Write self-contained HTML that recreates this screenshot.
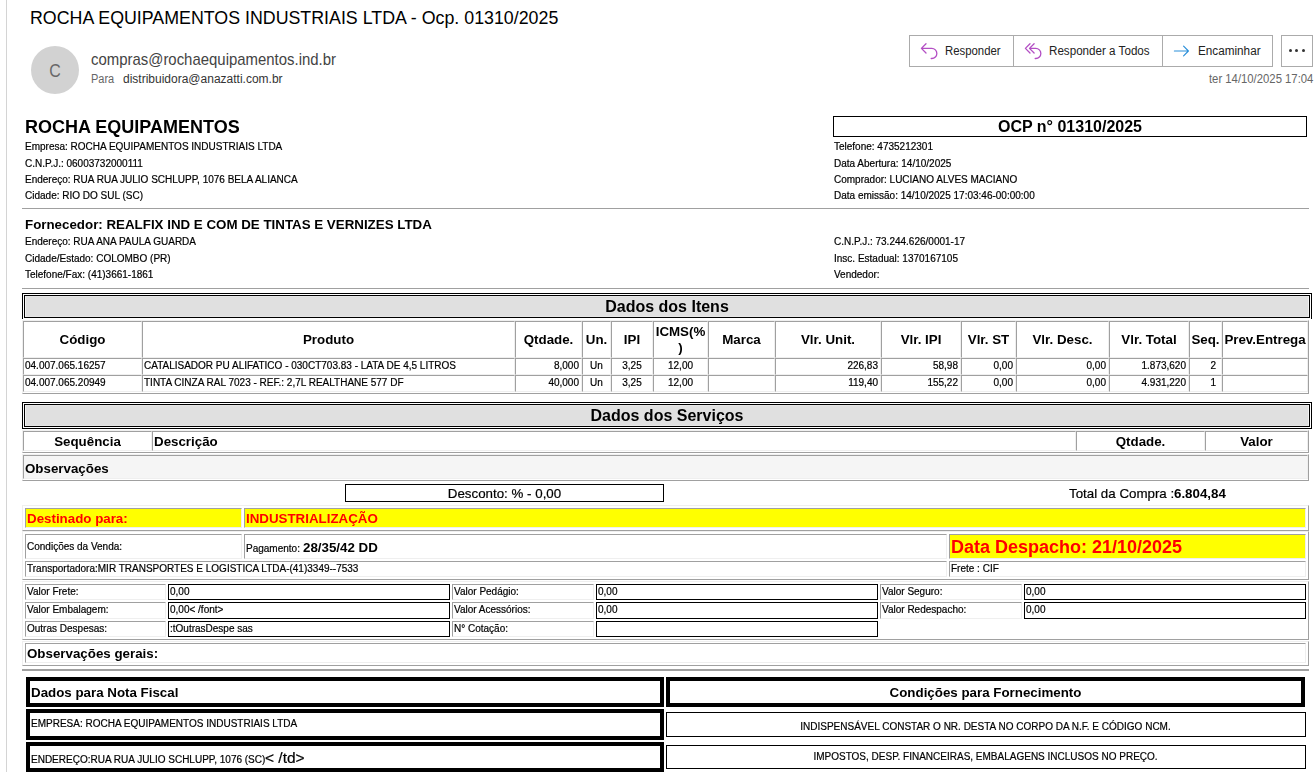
<!DOCTYPE html>
<html><head><meta charset="utf-8"><title>ROCHA EQUIPAMENTOS INDUSTRIAIS LTDA - Ocp. 01310/2025</title>
<style>
html,body{margin:0;padding:0;background:#fff;}
body{width:1315px;height:772px;position:relative;overflow:hidden;font-family:"Liberation Sans",sans-serif;color:#000;}
.t{position:absolute;white-space:nowrap;margin:0;padding:0;}
.b{position:absolute;margin:0;padding:0;}
</style></head><body>
<div class="b" style="left:6px;top:0px;width:1px;height:772px;background:#d4d4d4;"></div>
<div class="t" style="top:6px;line-height:24px;font-size:18px;left:30px;transform:scaleX(0.989);transform-origin:0 0;">ROCHA EQUIPAMENTOS INDUSTRIAIS LTDA - Ocp. 01310/2025</div>
<div class="b" style="left:31px;top:46px;width:48px;height:48px;border-radius:50%;background:#d2d2d2;"></div>
<div class="t" style="top:58px;line-height:25px;font-size:18.5px;color:#686868;left:-245px;width:600px;text-align:center;transform:scaleX(0.86);transform-origin:50% 0;">C</div>
<div class="t" style="top:48px;line-height:23px;font-size:17px;color:#444;left:91px;transform:scaleX(0.878);transform-origin:0 0;">compras@rochaequipamentos.ind.br</div>
<div class="t" style="top:70px;line-height:18px;font-size:12.5px;color:#666;left:91px;transform:scaleX(0.88);transform-origin:0 0;">Para</div>
<div class="t" style="top:70px;line-height:18px;font-size:12.5px;color:#333;left:123px;transform:scaleX(0.96);transform-origin:0 0;">distribuidora@anazatti.com.br</div>
<div class="b" style="left:909px;top:35px;width:364px;height:32px;box-sizing:border-box;border:1px solid #ababab;background:#fff;"></div>
<div class="b" style="left:1013px;top:35px;width:1px;height:32px;background:#ababab;"></div>
<div class="b" style="left:1162px;top:35px;width:1px;height:32px;background:#ababab;"></div>
<div class="b" style="left:1281px;top:35px;width:32px;height:32px;box-sizing:border-box;border:1px solid #ababab;background:#fff;"></div>
<div class="t" style="top:42px;line-height:18px;font-size:12px;color:#222;left:945px;transform:scaleX(0.947);transform-origin:0 0;">Responder</div>
<div class="t" style="top:42px;line-height:18px;font-size:12px;color:#222;left:1049px;transform:scaleX(0.969);transform-origin:0 0;">Responder a Todos</div>
<div class="t" style="top:42px;line-height:18px;font-size:12px;color:#222;left:1198px;transform:scaleX(0.977);transform-origin:0 0;">Encaminhar</div>
<div class="t" style="top:70px;line-height:18px;font-size:12.5px;color:#666;right:2px;text-align:right;transform:scaleX(0.905);transform-origin:100% 0;">ter 14/10/2025 17:04</div>
<svg class="b" style="left:919px;top:42px" width="20" height="20" viewBox="0 0 20 20" fill="none" stroke="#b34fc4" stroke-width="1.3" stroke-linecap="round" stroke-linejoin="round"><path d="M7 1.8 L2.4 6.4 L7 11 M2.6 6.4 H12.8 A5.05 5.05 0 0 1 12.8 16.5 H12.2"/></svg>
<svg class="b" style="left:1023px;top:42px" width="20" height="20" viewBox="0 0 20 20" fill="none" stroke="#b34fc4" stroke-width="1.3" stroke-linecap="round" stroke-linejoin="round"><path d="M7 1.8 L2.4 6.4 L7 11 M11.1 1.8 L6.5 6.4 L11.1 11 M6.7 6.4 H12.8 A5.05 5.05 0 0 1 12.8 16.5 H12.2"/></svg>
<svg class="b" style="left:1172px;top:41.5px" width="20" height="20" viewBox="0 0 20 20" fill="none" stroke="#2b8fd9" stroke-width="1.15" stroke-linecap="round" stroke-linejoin="round"><path d="M2.4 9 H16.4 M11.6 4.2 L16.4 9 L11.6 13.8"/></svg>
<div class="b" style="left:1289.3px;top:49px;width:3px;height:3px;border-radius:50%;background:#333;"></div>
<div class="b" style="left:1295.4px;top:49px;width:3px;height:3px;border-radius:50%;background:#333;"></div>
<div class="b" style="left:1301.6px;top:49px;width:3px;height:3px;border-radius:50%;background:#333;"></div>
<div class="b" style="left:0;top:0;width:1315px;height:772px;will-change:transform;">
<div class="t" style="top:115px;line-height:24px;font-size:18px;font-weight:bold;left:25px;">ROCHA EQUIPAMENTOS</div>
<div class="t" style="top:139px;line-height:15px;font-size:10px;left:25px;-webkit-text-stroke:0.2px #000;">Empresa: ROCHA EQUIPAMENTOS INDUSTRIAIS LTDA</div>
<div class="t" style="top:156px;line-height:15px;font-size:10px;left:25px;-webkit-text-stroke:0.2px #000;">C.N.P.J.: 06003732000111</div>
<div class="t" style="top:172px;line-height:15px;font-size:10px;left:25px;-webkit-text-stroke:0.2px #000;">Endereço: RUA RUA JULIO SCHLUPP, 1076 BELA ALIANCA</div>
<div class="t" style="top:188px;line-height:15px;font-size:10px;left:25px;-webkit-text-stroke:0.2px #000;">Cidade: RIO DO SUL (SC)</div>
<div class="b" style="left:833px;top:116px;width:474px;height:21px;box-sizing:border-box;border:1px solid #000;"></div>
<div class="t" style="top:116px;line-height:21px;font-size:16px;font-weight:bold;left:770px;width:600px;text-align:center;">OCP n° 01310/2025</div>
<div class="t" style="top:139px;line-height:15px;font-size:10px;left:834px;-webkit-text-stroke:0.2px #000;">Telefone: 4735212301</div>
<div class="t" style="top:156px;line-height:15px;font-size:10px;left:834px;-webkit-text-stroke:0.2px #000;">Data Abertura: 14/10/2025</div>
<div class="t" style="top:172px;line-height:15px;font-size:10px;left:834px;-webkit-text-stroke:0.2px #000;">Comprador: LUCIANO ALVES MACIANO</div>
<div class="t" style="top:188px;line-height:15px;font-size:10px;left:834px;-webkit-text-stroke:0.2px #000;">Data emissão: 14/10/2025 17:03:46-00:00:00</div>
<div class="b" style="left:22px;top:208px;width:1287px;height:1px;background:#a0a0a0;"></div>
<div class="t" style="top:215px;line-height:19px;font-size:13.33px;font-weight:bold;left:25px;">Fornecedor: REALFIX IND E COM DE TINTAS E VERNIZES LTDA</div>
<div class="t" style="top:234px;line-height:15px;font-size:10px;left:25px;-webkit-text-stroke:0.2px #000;">Endereço: RUA ANA PAULA GUARDA</div>
<div class="t" style="top:251px;line-height:15px;font-size:10px;left:25px;-webkit-text-stroke:0.2px #000;">Cidade/Estado: COLOMBO (PR)</div>
<div class="t" style="top:267px;line-height:15px;font-size:10px;left:25px;-webkit-text-stroke:0.2px #000;">Telefone/Fax: (41)3661-1861</div>
<div class="t" style="top:234px;line-height:15px;font-size:10px;left:834px;-webkit-text-stroke:0.2px #000;">C.N.P.J.: 73.244.626/0001-17</div>
<div class="t" style="top:251px;line-height:15px;font-size:10px;left:834px;-webkit-text-stroke:0.2px #000;">Insc. Estadual: 1370167105</div>
<div class="t" style="top:267px;line-height:15px;font-size:10px;left:834px;-webkit-text-stroke:0.2px #000;">Vendedor:</div>
<div class="b" style="left:22px;top:288px;width:1287px;height:1px;background:#a0a0a0;"></div>
<div class="b" style="left:22px;top:293px;width:1290px;height:26px;box-sizing:border-box;border:1px solid #000;border-bottom:none;"></div>
<div class="b" style="left:24px;top:295px;width:1286px;height:23px;box-sizing:border-box;border:1px solid #000;background:#e0e0e0;"></div>
<div class="b" style="left:25px;top:296px;width:1284px;height:21px;box-sizing:border-box;border-style:solid;border-width:1px;border-color:#e6e6e6 #f2f2f2;"></div>
<div class="t" style="top:296px;line-height:21px;font-size:16px;font-weight:bold;left:367px;width:600px;text-align:center;">Dados dos Itens</div>
<div class="b" style="left:22px;top:320px;width:1287px;height:74px;box-sizing:border-box;border-style:solid;border-width:1px;border-color:#efefef #a0a0a0 #a0a0a0 #efefef;"></div>
<div class="b" style="left:23px;top:321px;width:119px;height:37px;box-sizing:border-box;border-style:solid;border-width:1px;border-color:#a0a0a0 #efefef #efefef #a0a0a0;"></div>
<div class="t" style="top:330px;line-height:19px;font-size:13.33px;font-weight:bold;left:-217.5px;width:600px;text-align:center;">Código</div>
<div class="b" style="left:142px;top:321px;width:373px;height:37px;box-sizing:border-box;border-style:solid;border-width:1px;border-color:#a0a0a0 #efefef #efefef #a0a0a0;"></div>
<div class="t" style="top:330px;line-height:19px;font-size:13.33px;font-weight:bold;left:28.5px;width:600px;text-align:center;">Produto</div>
<div class="b" style="left:515px;top:321px;width:67px;height:37px;box-sizing:border-box;border-style:solid;border-width:1px;border-color:#a0a0a0 #efefef #efefef #a0a0a0;"></div>
<div class="t" style="top:330px;line-height:19px;font-size:13.33px;font-weight:bold;left:248.5px;width:600px;text-align:center;">Qtdade.</div>
<div class="b" style="left:582px;top:321px;width:29px;height:37px;box-sizing:border-box;border-style:solid;border-width:1px;border-color:#a0a0a0 #efefef #efefef #a0a0a0;"></div>
<div class="t" style="top:330px;line-height:19px;font-size:13.33px;font-weight:bold;left:296.5px;width:600px;text-align:center;">Un.</div>
<div class="b" style="left:611px;top:321px;width:42px;height:37px;box-sizing:border-box;border-style:solid;border-width:1px;border-color:#a0a0a0 #efefef #efefef #a0a0a0;"></div>
<div class="t" style="top:330px;line-height:19px;font-size:13.33px;font-weight:bold;left:332.0px;width:600px;text-align:center;">IPI</div>
<div class="b" style="left:653px;top:321px;width:55px;height:37px;box-sizing:border-box;border-style:solid;border-width:1px;border-color:#a0a0a0 #efefef #efefef #a0a0a0;"></div>
<div class="b" style="left:708px;top:321px;width:67px;height:37px;box-sizing:border-box;border-style:solid;border-width:1px;border-color:#a0a0a0 #efefef #efefef #a0a0a0;"></div>
<div class="t" style="top:330px;line-height:19px;font-size:13.33px;font-weight:bold;left:441.5px;width:600px;text-align:center;">Marca</div>
<div class="b" style="left:775px;top:321px;width:106px;height:37px;box-sizing:border-box;border-style:solid;border-width:1px;border-color:#a0a0a0 #efefef #efefef #a0a0a0;"></div>
<div class="t" style="top:330px;line-height:19px;font-size:13.33px;font-weight:bold;left:528.0px;width:600px;text-align:center;">Vlr. Unit.</div>
<div class="b" style="left:881px;top:321px;width:80px;height:37px;box-sizing:border-box;border-style:solid;border-width:1px;border-color:#a0a0a0 #efefef #efefef #a0a0a0;"></div>
<div class="t" style="top:330px;line-height:19px;font-size:13.33px;font-weight:bold;left:621.0px;width:600px;text-align:center;">Vlr. IPI</div>
<div class="b" style="left:961px;top:321px;width:55px;height:37px;box-sizing:border-box;border-style:solid;border-width:1px;border-color:#a0a0a0 #efefef #efefef #a0a0a0;"></div>
<div class="t" style="top:330px;line-height:19px;font-size:13.33px;font-weight:bold;left:688.5px;width:600px;text-align:center;">Vlr. ST</div>
<div class="b" style="left:1016px;top:321px;width:93px;height:37px;box-sizing:border-box;border-style:solid;border-width:1px;border-color:#a0a0a0 #efefef #efefef #a0a0a0;"></div>
<div class="t" style="top:330px;line-height:19px;font-size:13.33px;font-weight:bold;left:762.5px;width:600px;text-align:center;">Vlr. Desc.</div>
<div class="b" style="left:1109px;top:321px;width:80px;height:37px;box-sizing:border-box;border-style:solid;border-width:1px;border-color:#a0a0a0 #efefef #efefef #a0a0a0;"></div>
<div class="t" style="top:330px;line-height:19px;font-size:13.33px;font-weight:bold;left:849.0px;width:600px;text-align:center;">Vlr. Total</div>
<div class="b" style="left:1189px;top:321px;width:33px;height:37px;box-sizing:border-box;border-style:solid;border-width:1px;border-color:#a0a0a0 #efefef #efefef #a0a0a0;"></div>
<div class="t" style="top:330px;line-height:19px;font-size:13.33px;font-weight:bold;left:905.5px;width:600px;text-align:center;">Seq.</div>
<div class="b" style="left:1222px;top:321px;width:86px;height:37px;box-sizing:border-box;border-style:solid;border-width:1px;border-color:#a0a0a0 #efefef #efefef #a0a0a0;"></div>
<div class="t" style="top:330px;line-height:19px;font-size:13.33px;font-weight:bold;left:965.0px;width:600px;text-align:center;">Prev.Entrega</div>
<div class="t" style="top:322px;line-height:19px;font-size:13.33px;font-weight:bold;left:380.5px;width:600px;text-align:center;">ICMS(%</div>
<div class="t" style="top:338px;line-height:19px;font-size:13.33px;font-weight:bold;left:380.5px;width:600px;text-align:center;">)</div>
<div class="b" style="left:23px;top:358px;width:119px;height:17px;box-sizing:border-box;border-style:solid;border-width:1px;border-color:#a0a0a0 #efefef #efefef #a0a0a0;"></div>
<div class="t" style="top:358px;line-height:15px;font-size:10px;left:25px;-webkit-text-stroke:0.2px #000;">04.007.065.16257</div>
<div class="b" style="left:142px;top:358px;width:373px;height:17px;box-sizing:border-box;border-style:solid;border-width:1px;border-color:#a0a0a0 #efefef #efefef #a0a0a0;"></div>
<div class="t" style="top:358px;line-height:15px;font-size:10px;left:144px;-webkit-text-stroke:0.2px #000;">CATALISADOR PU ALIFATICO - 030CT703.83 - LATA DE 4,5 LITROS</div>
<div class="b" style="left:515px;top:358px;width:67px;height:17px;box-sizing:border-box;border-style:solid;border-width:1px;border-color:#a0a0a0 #efefef #efefef #a0a0a0;"></div>
<div class="t" style="top:358px;line-height:15px;font-size:10px;right:736px;text-align:right;-webkit-text-stroke:0.2px #000;">8,000</div>
<div class="b" style="left:582px;top:358px;width:29px;height:17px;box-sizing:border-box;border-style:solid;border-width:1px;border-color:#a0a0a0 #efefef #efefef #a0a0a0;"></div>
<div class="t" style="top:358px;line-height:15px;font-size:10px;left:296.5px;width:600px;text-align:center;-webkit-text-stroke:0.2px #000;">Un</div>
<div class="b" style="left:611px;top:358px;width:42px;height:17px;box-sizing:border-box;border-style:solid;border-width:1px;border-color:#a0a0a0 #efefef #efefef #a0a0a0;"></div>
<div class="t" style="top:358px;line-height:15px;font-size:10px;left:332.0px;width:600px;text-align:center;-webkit-text-stroke:0.2px #000;">3,25</div>
<div class="b" style="left:653px;top:358px;width:55px;height:17px;box-sizing:border-box;border-style:solid;border-width:1px;border-color:#a0a0a0 #efefef #efefef #a0a0a0;"></div>
<div class="t" style="top:358px;line-height:15px;font-size:10px;left:380.5px;width:600px;text-align:center;-webkit-text-stroke:0.2px #000;">12,00</div>
<div class="b" style="left:708px;top:358px;width:67px;height:17px;box-sizing:border-box;border-style:solid;border-width:1px;border-color:#a0a0a0 #efefef #efefef #a0a0a0;"></div>
<div class="b" style="left:775px;top:358px;width:106px;height:17px;box-sizing:border-box;border-style:solid;border-width:1px;border-color:#a0a0a0 #efefef #efefef #a0a0a0;"></div>
<div class="t" style="top:358px;line-height:15px;font-size:10px;right:437px;text-align:right;-webkit-text-stroke:0.2px #000;">226,83</div>
<div class="b" style="left:881px;top:358px;width:80px;height:17px;box-sizing:border-box;border-style:solid;border-width:1px;border-color:#a0a0a0 #efefef #efefef #a0a0a0;"></div>
<div class="t" style="top:358px;line-height:15px;font-size:10px;right:357px;text-align:right;-webkit-text-stroke:0.2px #000;">58,98</div>
<div class="b" style="left:961px;top:358px;width:55px;height:17px;box-sizing:border-box;border-style:solid;border-width:1px;border-color:#a0a0a0 #efefef #efefef #a0a0a0;"></div>
<div class="t" style="top:358px;line-height:15px;font-size:10px;right:302px;text-align:right;-webkit-text-stroke:0.2px #000;">0,00</div>
<div class="b" style="left:1016px;top:358px;width:93px;height:17px;box-sizing:border-box;border-style:solid;border-width:1px;border-color:#a0a0a0 #efefef #efefef #a0a0a0;"></div>
<div class="t" style="top:358px;line-height:15px;font-size:10px;right:209px;text-align:right;-webkit-text-stroke:0.2px #000;">0,00</div>
<div class="b" style="left:1109px;top:358px;width:80px;height:17px;box-sizing:border-box;border-style:solid;border-width:1px;border-color:#a0a0a0 #efefef #efefef #a0a0a0;"></div>
<div class="t" style="top:358px;line-height:15px;font-size:10px;right:129px;text-align:right;-webkit-text-stroke:0.2px #000;">1.873,620</div>
<div class="b" style="left:1189px;top:358px;width:33px;height:17px;box-sizing:border-box;border-style:solid;border-width:1px;border-color:#a0a0a0 #efefef #efefef #a0a0a0;"></div>
<div class="t" style="top:358px;line-height:15px;font-size:10px;right:99px;text-align:right;-webkit-text-stroke:0.2px #000;">2</div>
<div class="b" style="left:1222px;top:358px;width:86px;height:17px;box-sizing:border-box;border-style:solid;border-width:1px;border-color:#a0a0a0 #efefef #efefef #a0a0a0;"></div>
<div class="b" style="left:23px;top:375px;width:119px;height:17px;box-sizing:border-box;border-style:solid;border-width:1px;border-color:#a0a0a0 #efefef #efefef #a0a0a0;"></div>
<div class="t" style="top:375px;line-height:15px;font-size:10px;left:25px;-webkit-text-stroke:0.2px #000;">04.007.065.20949</div>
<div class="b" style="left:142px;top:375px;width:373px;height:17px;box-sizing:border-box;border-style:solid;border-width:1px;border-color:#a0a0a0 #efefef #efefef #a0a0a0;"></div>
<div class="t" style="top:375px;line-height:15px;font-size:10px;left:144px;-webkit-text-stroke:0.2px #000;">TINTA CINZA RAL 7023 - REF.: 2,7L REALTHANE 577 DF</div>
<div class="b" style="left:515px;top:375px;width:67px;height:17px;box-sizing:border-box;border-style:solid;border-width:1px;border-color:#a0a0a0 #efefef #efefef #a0a0a0;"></div>
<div class="t" style="top:375px;line-height:15px;font-size:10px;right:736px;text-align:right;-webkit-text-stroke:0.2px #000;">40,000</div>
<div class="b" style="left:582px;top:375px;width:29px;height:17px;box-sizing:border-box;border-style:solid;border-width:1px;border-color:#a0a0a0 #efefef #efefef #a0a0a0;"></div>
<div class="t" style="top:375px;line-height:15px;font-size:10px;left:296.5px;width:600px;text-align:center;-webkit-text-stroke:0.2px #000;">Un</div>
<div class="b" style="left:611px;top:375px;width:42px;height:17px;box-sizing:border-box;border-style:solid;border-width:1px;border-color:#a0a0a0 #efefef #efefef #a0a0a0;"></div>
<div class="t" style="top:375px;line-height:15px;font-size:10px;left:332.0px;width:600px;text-align:center;-webkit-text-stroke:0.2px #000;">3,25</div>
<div class="b" style="left:653px;top:375px;width:55px;height:17px;box-sizing:border-box;border-style:solid;border-width:1px;border-color:#a0a0a0 #efefef #efefef #a0a0a0;"></div>
<div class="t" style="top:375px;line-height:15px;font-size:10px;left:380.5px;width:600px;text-align:center;-webkit-text-stroke:0.2px #000;">12,00</div>
<div class="b" style="left:708px;top:375px;width:67px;height:17px;box-sizing:border-box;border-style:solid;border-width:1px;border-color:#a0a0a0 #efefef #efefef #a0a0a0;"></div>
<div class="b" style="left:775px;top:375px;width:106px;height:17px;box-sizing:border-box;border-style:solid;border-width:1px;border-color:#a0a0a0 #efefef #efefef #a0a0a0;"></div>
<div class="t" style="top:375px;line-height:15px;font-size:10px;right:437px;text-align:right;-webkit-text-stroke:0.2px #000;">119,40</div>
<div class="b" style="left:881px;top:375px;width:80px;height:17px;box-sizing:border-box;border-style:solid;border-width:1px;border-color:#a0a0a0 #efefef #efefef #a0a0a0;"></div>
<div class="t" style="top:375px;line-height:15px;font-size:10px;right:357px;text-align:right;-webkit-text-stroke:0.2px #000;">155,22</div>
<div class="b" style="left:961px;top:375px;width:55px;height:17px;box-sizing:border-box;border-style:solid;border-width:1px;border-color:#a0a0a0 #efefef #efefef #a0a0a0;"></div>
<div class="t" style="top:375px;line-height:15px;font-size:10px;right:302px;text-align:right;-webkit-text-stroke:0.2px #000;">0,00</div>
<div class="b" style="left:1016px;top:375px;width:93px;height:17px;box-sizing:border-box;border-style:solid;border-width:1px;border-color:#a0a0a0 #efefef #efefef #a0a0a0;"></div>
<div class="t" style="top:375px;line-height:15px;font-size:10px;right:209px;text-align:right;-webkit-text-stroke:0.2px #000;">0,00</div>
<div class="b" style="left:1109px;top:375px;width:80px;height:17px;box-sizing:border-box;border-style:solid;border-width:1px;border-color:#a0a0a0 #efefef #efefef #a0a0a0;"></div>
<div class="t" style="top:375px;line-height:15px;font-size:10px;right:129px;text-align:right;-webkit-text-stroke:0.2px #000;">4.931,220</div>
<div class="b" style="left:1189px;top:375px;width:33px;height:17px;box-sizing:border-box;border-style:solid;border-width:1px;border-color:#a0a0a0 #efefef #efefef #a0a0a0;"></div>
<div class="t" style="top:375px;line-height:15px;font-size:10px;right:99px;text-align:right;-webkit-text-stroke:0.2px #000;">1</div>
<div class="b" style="left:1222px;top:375px;width:86px;height:17px;box-sizing:border-box;border-style:solid;border-width:1px;border-color:#a0a0a0 #efefef #efefef #a0a0a0;"></div>
<div class="b" style="left:22px;top:402px;width:1290px;height:27px;box-sizing:border-box;border:1px solid #000;"></div>
<div class="b" style="left:24px;top:404px;width:1286px;height:23px;box-sizing:border-box;border:1px solid #000;background:#e0e0e0;"></div>
<div class="b" style="left:25px;top:405px;width:1284px;height:21px;box-sizing:border-box;border-style:solid;border-width:1px;border-color:#e6e6e6 #f2f2f2;"></div>
<div class="t" style="top:405px;line-height:21px;font-size:16px;font-weight:bold;left:367px;width:600px;text-align:center;">Dados dos Serviços</div>
<div class="b" style="left:22px;top:430px;width:1287px;height:23px;box-sizing:border-box;border-style:solid;border-width:1px;border-color:#efefef #a0a0a0 #a0a0a0 #efefef;"></div>
<div class="b" style="left:23px;top:431px;width:129px;height:20px;box-sizing:border-box;border-style:solid;border-width:1px;border-color:#a0a0a0 #efefef #efefef #a0a0a0;"></div>
<div class="t" style="top:432px;line-height:19px;font-size:13.33px;font-weight:bold;left:-212.5px;width:600px;text-align:center;">Sequência</div>
<div class="b" style="left:152px;top:431px;width:924px;height:20px;box-sizing:border-box;border-style:solid;border-width:1px;border-color:#a0a0a0 #efefef #efefef #a0a0a0;"></div>
<div class="t" style="top:432px;line-height:19px;font-size:13.33px;font-weight:bold;left:154px;">Descrição</div>
<div class="b" style="left:1076px;top:431px;width:129px;height:20px;box-sizing:border-box;border-style:solid;border-width:1px;border-color:#a0a0a0 #efefef #efefef #a0a0a0;"></div>
<div class="t" style="top:432px;line-height:19px;font-size:13.33px;font-weight:bold;left:840.5px;width:600px;text-align:center;">Qtdade.</div>
<div class="b" style="left:1205px;top:431px;width:103px;height:20px;box-sizing:border-box;border-style:solid;border-width:1px;border-color:#a0a0a0 #efefef #efefef #a0a0a0;"></div>
<div class="t" style="top:432px;line-height:19px;font-size:13.33px;font-weight:bold;left:956.5px;width:600px;text-align:center;">Valor</div>
<div class="b" style="left:22px;top:454px;width:1287px;height:27px;box-sizing:border-box;border-style:solid;border-width:1px;border-color:#efefef #a0a0a0 #a0a0a0 #efefef;"></div>
<div class="b" style="left:23px;top:455px;width:1285px;height:24px;box-sizing:border-box;border-style:solid;border-width:1px;border-color:#a0a0a0 #efefef #efefef #a0a0a0;background:#f5f5f5;"></div>
<div class="t" style="top:459px;line-height:19px;font-size:13.33px;font-weight:bold;left:25px;">Observações</div>
<div class="b" style="left:345px;top:484px;width:319px;height:18px;box-sizing:border-box;border:1px solid #000;"></div>
<div class="t" style="top:484px;line-height:19px;font-size:13.33px;left:204.5px;width:600px;text-align:center;-webkit-text-stroke:0.2px #000;">Desconto: % - 0,00</div>
<div class="t" style="top:484px;line-height:19px;font-size:13.33px;left:1069px;-webkit-text-stroke:0.2px #000;">Total da Compra :</div>
<div class="t" style="top:484px;line-height:19px;font-size:13.33px;font-weight:bold;left:1174px;">6.804,84</div>
<div class="b" style="left:22px;top:505px;width:1287px;height:26px;box-sizing:border-box;border-style:solid;border-width:1px;border-color:#efefef #a0a0a0 #a0a0a0 #efefef;"></div>
<div class="b" style="left:25px;top:508px;width:217px;height:20px;box-sizing:border-box;border-style:solid;border-width:1px;border-color:#a0a0a0 #efefef #efefef #a0a0a0;background:#ffff00;"></div>
<div class="b" style="left:244px;top:508px;width:1062px;height:20px;box-sizing:border-box;border-style:solid;border-width:1px;border-color:#a0a0a0 #efefef #efefef #a0a0a0;background:#ffff00;"></div>
<div class="t" style="top:509px;line-height:19px;font-size:13.33px;font-weight:bold;color:#ff0000;left:27px;">Destinado para:</div>
<div class="t" style="top:509px;line-height:19px;font-size:13.33px;font-weight:bold;color:#ff0000;left:246px;">INDUSTRIALIZAÇÃO</div>
<div class="b" style="left:22px;top:531px;width:1287px;height:49px;box-sizing:border-box;border-style:solid;border-width:1px;border-color:#efefef #a0a0a0 #a0a0a0 #efefef;"></div>
<div class="b" style="left:25px;top:534px;width:217px;height:25px;box-sizing:border-box;border-style:solid;border-width:1px;border-color:#a0a0a0 #efefef #efefef #a0a0a0;"></div>
<div class="b" style="left:244px;top:534px;width:703px;height:25px;box-sizing:border-box;border-style:solid;border-width:1px;border-color:#a0a0a0 #efefef #efefef #a0a0a0;"></div>
<div class="b" style="left:949px;top:534px;width:357px;height:25px;box-sizing:border-box;border-style:solid;border-width:1px;border-color:#a0a0a0 #efefef #efefef #a0a0a0;background:#ffff00;"></div>
<div class="t" style="top:539px;line-height:15px;font-size:10px;left:27px;-webkit-text-stroke:0.2px #000;">Condições da Venda:</div>
<div class="t" style="top:541px;line-height:15px;font-size:10px;left:246px;-webkit-text-stroke:0.2px #000;">Pagamento:</div>
<div class="t" style="top:538px;line-height:19px;font-size:13.33px;font-weight:bold;left:303px;">28/35/42 DD</div>
<div class="t" style="top:535px;line-height:24px;font-size:18px;font-weight:bold;color:#ff0000;left:951px;">Data Despacho: 21/10/2025</div>
<div class="b" style="left:25px;top:561px;width:922px;height:16px;box-sizing:border-box;border-style:solid;border-width:1px;border-color:#a0a0a0 #efefef #efefef #a0a0a0;"></div>
<div class="b" style="left:949px;top:561px;width:357px;height:16px;box-sizing:border-box;border-style:solid;border-width:1px;border-color:#a0a0a0 #efefef #efefef #a0a0a0;"></div>
<div class="t" style="top:561px;line-height:15px;font-size:10px;left:27px;-webkit-text-stroke:0.2px #000;">Transportadora:MIR TRANSPORTES E LOGISTICA LTDA-(41)3349--7533</div>
<div class="t" style="top:561px;line-height:15px;font-size:10px;left:951px;-webkit-text-stroke:0.2px #000;">Frete : CIF</div>
<div class="b" style="left:22px;top:581px;width:1287px;height:59px;box-sizing:border-box;border-style:solid;border-width:1px;border-color:#efefef #a0a0a0 #a0a0a0 #efefef;"></div>
<div class="b" style="left:25px;top:584px;width:141px;height:16px;box-sizing:border-box;border-style:solid;border-width:1px;border-color:#a0a0a0 #efefef #efefef #a0a0a0;"></div>
<div class="t" style="top:584px;line-height:15px;font-size:10px;left:27px;-webkit-text-stroke:0.2px #000;">Valor Frete:</div>
<div class="b" style="left:452px;top:584px;width:142px;height:16px;box-sizing:border-box;border-style:solid;border-width:1px;border-color:#a0a0a0 #efefef #efefef #a0a0a0;"></div>
<div class="t" style="top:584px;line-height:15px;font-size:10px;left:454px;-webkit-text-stroke:0.2px #000;">Valor Pedágio:</div>
<div class="b" style="left:880px;top:584px;width:142px;height:16px;box-sizing:border-box;border-style:solid;border-width:1px;border-color:#a0a0a0 #efefef #efefef #a0a0a0;"></div>
<div class="t" style="top:584px;line-height:15px;font-size:10px;left:882px;-webkit-text-stroke:0.2px #000;">Valor Seguro:</div>
<div class="b" style="left:168px;top:584px;width:282px;height:16px;box-sizing:border-box;border:1px solid #000;"></div>
<div class="t" style="top:584px;line-height:15px;font-size:10px;left:170px;-webkit-text-stroke:0.2px #000;">0,00</div>
<div class="b" style="left:596px;top:584px;width:282px;height:16px;box-sizing:border-box;border:1px solid #000;"></div>
<div class="t" style="top:584px;line-height:15px;font-size:10px;left:598px;-webkit-text-stroke:0.2px #000;">0,00</div>
<div class="b" style="left:1024px;top:584px;width:282px;height:16px;box-sizing:border-box;border:1px solid #000;"></div>
<div class="t" style="top:584px;line-height:15px;font-size:10px;left:1026px;-webkit-text-stroke:0.2px #000;">0,00</div>
<div class="b" style="left:25px;top:602px;width:141px;height:17px;box-sizing:border-box;border-style:solid;border-width:1px;border-color:#a0a0a0 #efefef #efefef #a0a0a0;"></div>
<div class="t" style="top:602px;line-height:15px;font-size:10px;left:27px;-webkit-text-stroke:0.2px #000;">Valor Embalagem:</div>
<div class="b" style="left:452px;top:602px;width:142px;height:17px;box-sizing:border-box;border-style:solid;border-width:1px;border-color:#a0a0a0 #efefef #efefef #a0a0a0;"></div>
<div class="t" style="top:602px;line-height:15px;font-size:10px;left:454px;-webkit-text-stroke:0.2px #000;">Valor Acessórios:</div>
<div class="b" style="left:880px;top:602px;width:142px;height:17px;box-sizing:border-box;border-style:solid;border-width:1px;border-color:#a0a0a0 #efefef #efefef #a0a0a0;"></div>
<div class="t" style="top:602px;line-height:15px;font-size:10px;left:882px;-webkit-text-stroke:0.2px #000;">Valor Redespacho:</div>
<div class="b" style="left:168px;top:602px;width:282px;height:17px;box-sizing:border-box;border:1px solid #000;"></div>
<div class="t" style="top:602px;line-height:15px;font-size:10px;left:170px;-webkit-text-stroke:0.2px #000;">0,00&lt; /font&gt;</div>
<div class="b" style="left:596px;top:602px;width:282px;height:17px;box-sizing:border-box;border:1px solid #000;"></div>
<div class="t" style="top:602px;line-height:15px;font-size:10px;left:598px;-webkit-text-stroke:0.2px #000;">0,00</div>
<div class="b" style="left:1024px;top:602px;width:282px;height:17px;box-sizing:border-box;border:1px solid #000;"></div>
<div class="t" style="top:602px;line-height:15px;font-size:10px;left:1026px;-webkit-text-stroke:0.2px #000;">0,00</div>
<div class="b" style="left:25px;top:621px;width:141px;height:16px;box-sizing:border-box;border-style:solid;border-width:1px;border-color:#a0a0a0 #efefef #efefef #a0a0a0;"></div>
<div class="t" style="top:621px;line-height:15px;font-size:10px;left:27px;-webkit-text-stroke:0.2px #000;">Outras Despesas:</div>
<div class="b" style="left:452px;top:621px;width:142px;height:16px;box-sizing:border-box;border-style:solid;border-width:1px;border-color:#a0a0a0 #efefef #efefef #a0a0a0;"></div>
<div class="t" style="top:621px;line-height:15px;font-size:10px;left:454px;-webkit-text-stroke:0.2px #000;">N° Cotação:</div>
<div class="b" style="left:168px;top:621px;width:282px;height:16px;box-sizing:border-box;border:1px solid #000;"></div>
<div class="t" style="top:621px;line-height:15px;font-size:10px;left:170px;-webkit-text-stroke:0.2px #000;">:tOutrasDespe sas</div>
<div class="b" style="left:596px;top:621px;width:282px;height:16px;box-sizing:border-box;border:1px solid #000;"></div>
<div class="b" style="left:22px;top:641px;width:1287px;height:25px;box-sizing:border-box;border-style:solid;border-width:1px;border-color:#efefef #a0a0a0 #a0a0a0 #efefef;"></div>
<div class="b" style="left:25px;top:643px;width:1281px;height:20px;box-sizing:border-box;border-style:solid;border-width:1px;border-color:#a0a0a0 #efefef #efefef #a0a0a0;"></div>
<div class="t" style="top:644px;line-height:19px;font-size:13.33px;font-weight:bold;left:27px;">Observações gerais:</div>
<div class="b" style="left:22px;top:669px;width:1287px;height:2px;background:#a0a0a0;"></div>
<div class="b" style="left:26px;top:677px;width:638px;height:30px;box-sizing:border-box;border:4px solid #000;"></div>
<div class="t" style="top:683px;line-height:19px;font-size:13.33px;font-weight:bold;left:31px;">Dados para Nota Fiscal</div>
<div class="b" style="left:26px;top:709px;width:638px;height:31px;box-sizing:border-box;border:4px solid #000;"></div>
<div class="t" style="top:716px;line-height:15px;font-size:10px;left:31px;-webkit-text-stroke:0.2px #000;">EMPRESA: ROCHA EQUIPAMENTOS INDUSTRIAIS LTDA</div>
<div class="b" style="left:26px;top:742px;width:638px;height:30px;box-sizing:border-box;border:4px solid #000;"></div>
<div class="t" style="top:752px;line-height:15px;font-size:10px;left:31px;-webkit-text-stroke:0.2px #000;">ENDEREÇO:RUA RUA JULIO SCHLUPP, 1076 (SC)</div>
<div class="t" style="top:747px;line-height:21px;font-size:15.5px;left:265px;-webkit-text-stroke:0.2px #000;">&lt; /td&gt;</div>
<div class="b" style="left:666px;top:677px;width:639px;height:30px;box-sizing:border-box;border:4px solid #000;"></div>
<div class="t" style="top:683px;line-height:19px;font-size:13.33px;font-weight:bold;left:685.5px;width:600px;text-align:center;">Condições para Fornecimento</div>
<div class="b" style="left:666px;top:712px;width:640px;height:25px;box-sizing:border-box;border:1px solid #000;"></div>
<div class="t" style="top:719px;line-height:15px;font-size:10px;left:685.5px;width:600px;text-align:center;-webkit-text-stroke:0.2px #000;">INDISPENSÁVEL CONSTAR O NR. DESTA NO CORPO DA N.F. E CÓDIGO NCM.</div>
<div class="b" style="left:666px;top:745px;width:640px;height:24px;box-sizing:border-box;border:1px solid #000;"></div>
<div class="t" style="top:749px;line-height:15px;font-size:10px;left:685.5px;width:600px;text-align:center;-webkit-text-stroke:0.2px #000;">IMPOSTOS, DESP. FINANCEIRAS, EMBALAGENS INCLUSOS NO PREÇO.</div>
</div>
</body></html>
